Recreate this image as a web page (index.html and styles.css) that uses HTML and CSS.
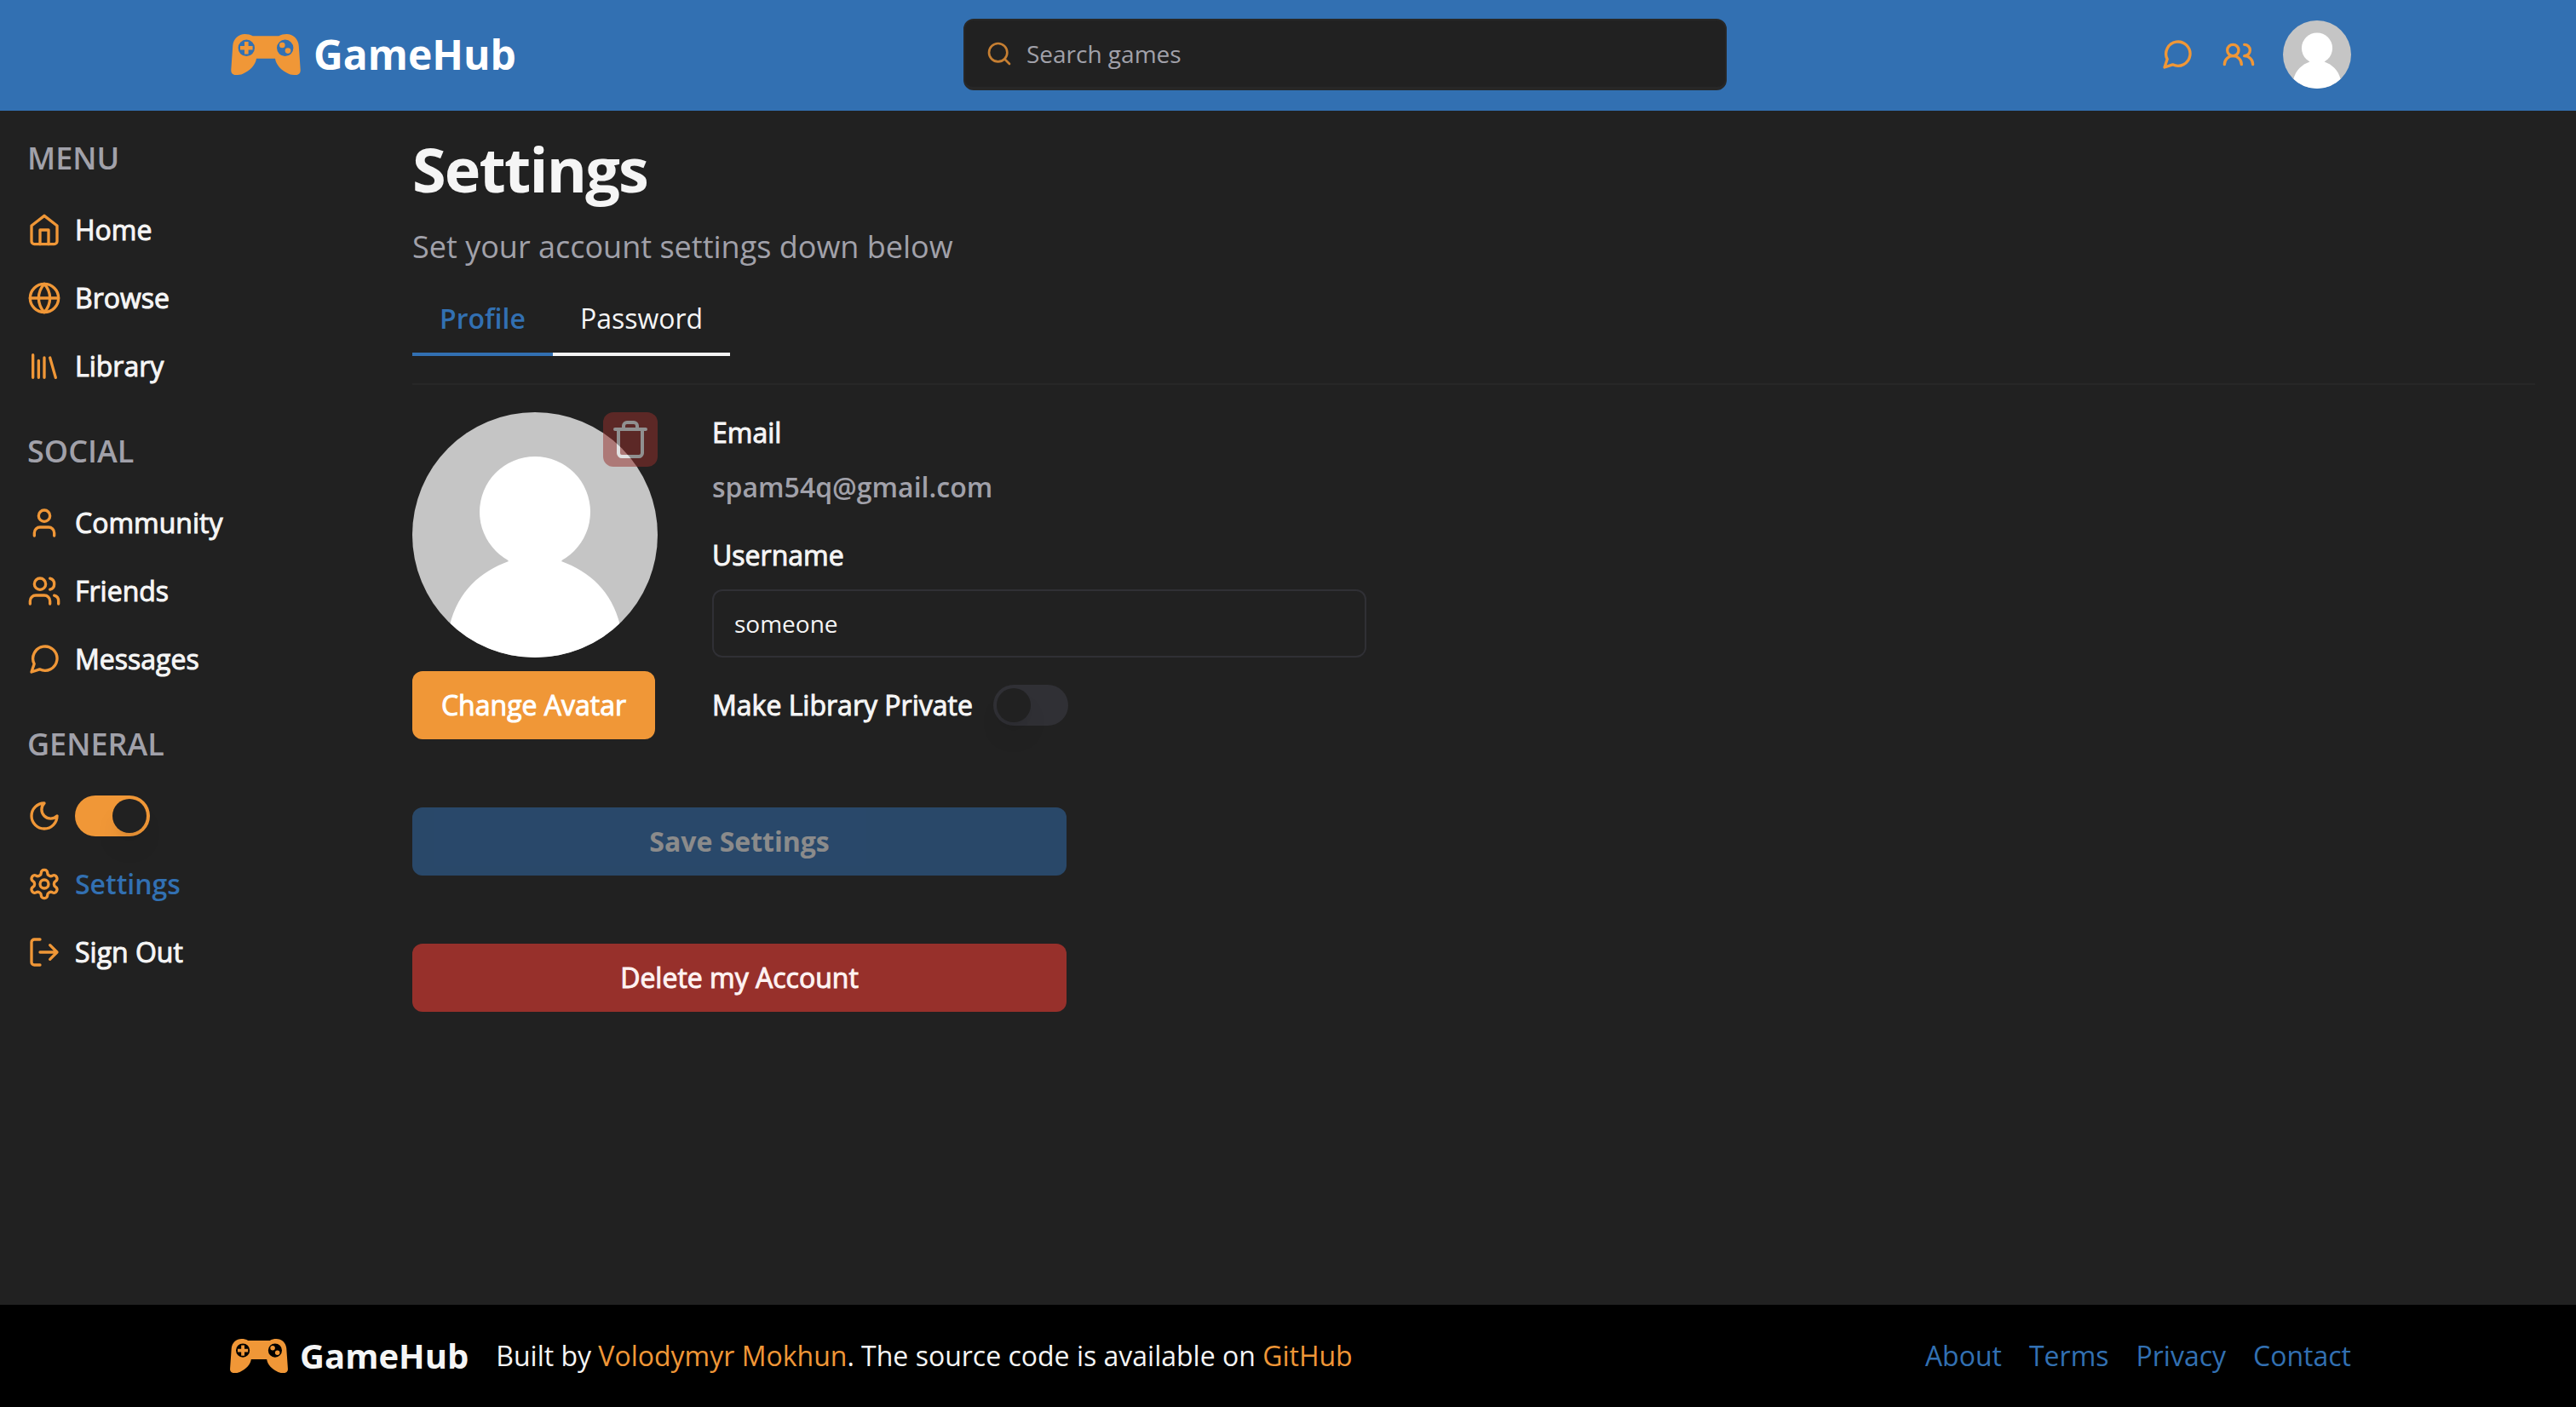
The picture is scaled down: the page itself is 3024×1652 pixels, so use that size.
FILE: index.html
```html
<!DOCTYPE html>
<html lang="en">
<head>
<meta charset="utf-8">
<meta name="viewport" content="width=device-width, initial-scale=1">
<title>Settings | GameHub</title>
<link rel="stylesheet" href="styles.css">
</head>
<body>
<svg class="sprite" aria-hidden="true">
  <symbol id="gamepad" viewBox="0 0 96 96">
    <path fill="currentColor" fill-rule="evenodd" d="M23.500 24C27 24 30 24.800 32.700 26.300H63.300C66 24.800 69 24 72.500 24C80 24 86 29.500 86.700 37.300L88.700 65.700C89 69.500 87 72 83.300 72C80 72 77.500 71.800 75 70.700C66 66.500 60 60 59 52.700H37C36 60 30 66.500 21 70.700C18.500 71.800 16 72 12.700 72C9 72 7 69.500 7.300 65.700L9.300 37.300C10 29.500 16 24 23.500 24ZM25.300 30.600a9.700 9.700 0 1 0 0 19.400a9.700 9.700 0 1 0 0-19.400ZM70.700 30.600a9.700 9.700 0 1 0 0 19.400a9.700 9.700 0 1 0 0-19.400Z"/>
    <path fill="currentColor" d="M23 33h4.600v5h5v4.600h-5v5H23v-5h-5V38h5z"/>
    <circle cx="67.300" cy="37" r="3.300" fill="currentColor"/>
    <circle cx="74" cy="43.600" r="3.300" fill="currentColor"/>
  </symbol>
  <symbol id="person" viewBox="0 0 288 288">
    <rect width="288" height="288" fill="#c5c5c5"/>
    <circle cx="144" cy="117" r="65" fill="#fff"/>
    <path fill="#fff" d="M108 168L113 175C80 187 54 210 44 250V288H244V250C234 210 208 187 175 175L180 168Z"/>
  </symbol>
  <symbol id="message" viewBox="0 0 24 24"><path d="m3 21 1.900-5.700a8.500 8.500 0 1 1 3.800 3.800z"/></symbol>
</svg>

<header class="topbar">
  <div class="container topbar-row">
    <a class="brand" href="#"><svg class="brand-icon"><use href="#gamepad"/></svg><span>GameHub</span></a>
    <div class="search">
      <svg class="icon search-icon" viewBox="0 0 24 24"><circle cx="11" cy="11" r="8"/><path d="m21 21-4.300-4.300"/></svg>
      <input class="search-input" type="text" placeholder="Search games" aria-label="Search games">
    </div>
    <nav class="actions" aria-label="Account">
      <a class="action" href="#" aria-label="Messages"><svg class="icon"><use href="#message"/></svg></a>
      <a class="action" href="#" aria-label="Friends"><svg class="icon" viewBox="0 0 24 24"><path d="M14 19a6 6 0 0 0-12 0"/><circle cx="8" cy="9" r="4"/><path d="M22 19a6 6 0 0 0-6-6 4 4 0 1 0 0-8"/></svg></a>
      <button class="account" type="button" aria-label="Account menu"><svg class="account-image"><use href="#person"/></svg></button>
    </nav>
  </div>
</header>

<div class="layout">
  <aside class="sidebar">
    <section class="group">
      <h2 class="group-title">MENU</h2>
      <a class="item" href="#"><svg class="icon" viewBox="0 0 24 24"><path d="m3 9 9-7 9 7v11a2 2 0 0 1-2 2H5a2 2 0 0 1-2-2z"/><path d="M9 22V12h6v10"/></svg><span>Home</span></a>
      <a class="item" href="#"><svg class="icon" viewBox="0 0 24 24"><circle cx="12" cy="12" r="10"/><path d="M2 12h20M12 2a15.300 15.300 0 0 1 4 10 15.300 15.300 0 0 1-4 10 15.300 15.300 0 0 1-4-10 15.300 15.300 0 0 1 4-10z"/></svg><span>Browse</span></a>
      <a class="item" href="#"><svg class="icon" viewBox="0 0 24 24"><path d="m16 6 4 14M12 6v14M8 8v12M4 4v16"/></svg><span>Library</span></a>
    </section>
    <section class="group">
      <h2 class="group-title">SOCIAL</h2>
      <a class="item" href="#"><svg class="icon" viewBox="0 0 24 24"><path d="M19 21v-2a4 4 0 0 0-4-4H9a4 4 0 0 0-4 4v2"/><circle cx="12" cy="7" r="4"/></svg><span>Community</span></a>
      <a class="item" href="#"><svg class="icon" viewBox="0 0 24 24"><path d="M16 21v-2a4 4 0 0 0-4-4H6a4 4 0 0 0-4 4v2"/><circle cx="9" cy="7" r="4"/><path d="M22 21v-2a4 4 0 0 0-3-3.870M16 3.130a4 4 0 0 1 0 7.750"/></svg><span>Friends</span></a>
      <a class="item" href="#"><svg class="icon"><use href="#message"/></svg><span>Messages</span></a>
    </section>
    <section class="group">
      <h2 class="group-title">GENERAL</h2>
      <div class="item"><svg class="icon" viewBox="0 0 24 24"><path d="M12 3a6 6 0 0 0 9 9 9 9 0 1 1-9-9Z"/></svg><input class="switch" type="checkbox" role="switch" aria-label="Dark mode" checked></div>
      <a class="item item-active" href="#" aria-current="page"><svg class="icon" viewBox="0 0 24 24"><path d="M12.220 2h-.440a2 2 0 0 0-2 2v.180a2 2 0 0 1-1 1.730l-.430.250a2 2 0 0 1-2 0l-.150-.080a2 2 0 0 0-2.730.730l-.220.380a2 2 0 0 0 .730 2.730l.150.100a2 2 0 0 1 1 1.720v.510a2 2 0 0 1-1 1.740l-.150.090a2 2 0 0 0-.730 2.730l.220.380a2 2 0 0 0 2.730.730l.150-.080a2 2 0 0 1 2 0l.430.250a2 2 0 0 1 1 1.730V20a2 2 0 0 0 2 2h.440a2 2 0 0 0 2-2v-.180a2 2 0 0 1 1-1.730l.430-.250a2 2 0 0 1 2 0l.150.080a2 2 0 0 0 2.730-.730l.220-.390a2 2 0 0 0-.730-2.730l-.150-.080a2 2 0 0 1-1-1.740v-.500a2 2 0 0 1 1-1.740l.150-.090a2 2 0 0 0 .730-2.730l-.220-.380a2 2 0 0 0-2.730-.730l-.150.080a2 2 0 0 1-2 0l-.430-.250a2 2 0 0 1-1-1.730V4a2 2 0 0 0-2-2z"/><circle cx="12" cy="12" r="3"/></svg><span>Settings</span></a>
      <button class="item" type="button"><svg class="icon" viewBox="0 0 24 24"><path d="M9 21H5a2 2 0 0 1-2-2V5a2 2 0 0 1 2-2h4M16 17l5-5-5-5M21 12H9"/></svg><span>Sign Out</span></button>
    </section>
  </aside>

  <main class="content">
    <h1 class="title">Settings</h1>
    <p class="subtitle">Set your account settings down below</p>
    <nav class="tabs" aria-label="Settings sections">
      <a class="tab tab-active" href="#" aria-current="page">Profile</a>
      <a class="tab" href="#">Password</a>
    </nav>
    <form class="form">
      <div class="profile">
        <div class="avatar-column">
          <div class="avatar">
            <svg class="avatar-image" role="img" aria-label="Your avatar"><use href="#person"/></svg>
            <button class="avatar-remove" type="button" aria-label="Remove avatar" disabled><svg class="icon" viewBox="0 0 24 24"><path d="M3 6h18M19 6v14c0 1-1 2-2 2H7c-1 0-2-1-2-2V6M8 6V4c0-1 1-2 2-2h4c1 0 2 1 2 2v2"/></svg></button>
          </div>
          <button class="button button-accent" type="button">Change Avatar</button>
        </div>
        <div class="fields">
          <div class="field">
            <span class="label">Email</span>
            <span class="email">spam54q@gmail.com</span>
          </div>
          <div class="field">
            <label class="label" for="username">Username</label>
            <input class="text-input" id="username" type="text" value="someone">
          </div>
          <div class="switch-row">
            <label class="label" for="private">Make Library Private</label>
            <input class="switch" id="private" type="checkbox" role="switch">
          </div>
        </div>
      </div>
      <button class="button button-primary" type="submit" disabled>Save Settings</button>
      <button class="button button-danger" type="button">Delete my Account</button>
    </form>
  </main>
</div>

<footer class="footer">
  <div class="container footer-row">
    <a class="brand brand-small" href="#"><svg class="brand-icon"><use href="#gamepad"/></svg><span>GameHub</span></a>
    <p class="credit">Built by <a class="credit-link" href="#">Volodymyr Mokhun</a>. The source code is available on <a class="credit-link" href="#">GitHub</a></p>
    <nav class="footer-nav" aria-label="Footer">
      <a class="footer-link" href="#">About</a>
      <a class="footer-link" href="#">Terms</a>
      <a class="footer-link" href="#">Privacy</a>
      <a class="footer-link" href="#">Contact</a>
    </nav>
  </div>
</footer>
</body>
</html>
```

FILE: styles.css
```css
:root {
  --background: #212121;
  --foreground: #f5f5f5;
  --muted: #a1a1aa;
  --primary: #3270b2;
  --accent: #f09737;
  --danger: #97302b;
  --line: #272727;
  --input: #303035;
  --radius: 12px;
}

* { box-sizing: border-box; }

body {
  margin: 0;
  min-height: 100vh;
  display: flex;
  flex-direction: column;
  background: var(--background);
  color: var(--foreground);
  font: 400 32px/48px "Open Sans", "Noto Sans", sans-serif;
}

h1, h2, p { margin: 0; }
a { color: inherit; text-decoration: none; }
button, input { font: inherit; color: inherit; margin: 0; }
button { border: 0; padding: 0; background: none; cursor: pointer; }

.sprite { position: absolute; width: 0; height: 0; }

.icon {
  flex: none;
  width: 40px;
  height: 40px;
  fill: none;
  stroke: var(--accent);
  stroke-width: 2;
  stroke-linecap: round;
  stroke-linejoin: round;
}

.container {
  width: 100%;
  max-width: 2560px;
  margin: 0 auto;
  padding: 0 32px;
  display: flex;
  align-items: center;
}

.item, .label, .button-accent, .button-danger {
  font-weight: 500;
  -webkit-text-stroke: 1px currentColor;
}

/* Top bar */
.topbar { background: var(--primary); border-bottom: 2px solid var(--primary); }
.topbar-row { justify-content: space-between; height: 128px; }

.brand {
  display: flex;
  align-items: center;
  gap: 8px;
  padding-right: 16px;
  color: #fff;
  font-size: 48px;
  line-height: 64px;
  font-weight: 700;
}
.brand-icon { flex: none; width: 96px; height: 96px; color: var(--accent); }

.search {
  display: flex;
  align-items: center;
  gap: 16px;
  width: 896px;
  height: 84px;
  padding: 0 24px;
  background: var(--background);
  border: 2px solid var(--line);
  border-bottom-width: 4px;
  border-radius: var(--radius);
}
.search-icon { width: 32px; height: 32px; opacity: 0.8; }
.search-input {
  flex: 1;
  min-width: 0;
  padding: 0;
  border: 0;
  outline: 0;
  background: none;
  font-size: 28px;
  line-height: 40px;
}
.search-input::placeholder { color: var(--muted); opacity: 1; }

.actions { display: flex; align-items: center; gap: 32px; }
.action { display: flex; }
.account { display: flex; border-radius: 50%; overflow: hidden; }
.account-image { width: 80px; height: 80px; }

/* Page body */
.layout { flex: 1; display: flex; }

.sidebar {
  flex: none;
  width: 436px;
  padding: 28px 32px;
  display: flex;
  flex-direction: column;
  gap: 32px;
}
.group { display: flex; flex-direction: column; }
.group-title {
  margin-bottom: 16px;
  color: var(--muted);
  font-size: 36px;
  line-height: 56px;
  font-weight: 600;
}
.item {
  display: flex;
  align-items: center;
  gap: 16px;
  height: 80px;
}
.item-active { color: var(--primary); font-weight: 600; -webkit-text-stroke: 0; }

.switch {
  appearance: none;
  flex: none;
  width: 88px;
  height: 48px;
  padding: 4px;
  display: flex;
  background: var(--input);
  border-radius: 24px;
  cursor: pointer;
}
.switch::before {
  content: "";
  width: 40px;
  height: 40px;
  border-radius: 50%;
  background: var(--background);
  box-shadow: 0 20px 30px -6px rgb(0 0 0 / 0.1), 0 8px 12px -8px rgb(0 0 0 / 0.1);
}
.switch:checked { background: var(--accent); justify-content: flex-end; }

.content { flex: 1; min-width: 0; padding: 28px 48px 80px; }
.title { font-size: 72px; line-height: 80px; font-weight: 700; letter-spacing: -0.025em; }
.subtitle { margin-top: 24px; color: var(--muted); font-size: 36px; line-height: 56px; }

.tabs { display: flex; margin-top: 16px; padding-bottom: 32px; border-bottom: 2px solid var(--line); }
.tab { padding: 16px 32px; border-bottom: 4px solid var(--foreground); }
.tab-active { color: var(--primary); border-color: var(--primary); font-weight: 600; }

/* Profile form */
.form { display: flex; flex-direction: column; align-items: flex-start; gap: 80px; padding-top: 32px; }
.profile { display: flex; gap: 64px; }
.avatar-column { display: flex; flex-direction: column; align-items: flex-start; gap: 16px; }
.avatar { position: relative; display: flex; }
.avatar-image { width: 288px; height: 288px; border-radius: 50%; }
.avatar-remove {
  position: absolute;
  top: 0;
  right: 0;
  display: flex;
  padding: 8px;
  border-radius: var(--radius);
  background: var(--danger);
  opacity: 0.5;
}
.avatar-remove .icon { width: 48px; height: 48px; stroke: #fff; }

.fields { display: flex; flex-direction: column; gap: 32px; }
.field { display: flex; flex-direction: column; gap: 16px; }
.email { color: var(--muted); font-weight: 600; }
.text-input {
  width: 768px;
  height: 80px;
  padding: 0 24px;
  background: none;
  border: 2px solid var(--input);
  border-radius: var(--radius);
  font-size: 28px;
  line-height: 40px;
}
.switch-row { display: flex; align-items: center; gap: 24px; }

.button {
  height: 80px;
  padding: 0 32px;
  border-radius: var(--radius);
}
.button-accent { min-width: 285px; background: var(--accent); color: #fff; }
.button-primary, .button-danger { width: 768px; }
.button-primary { background: var(--primary); font-weight: 700; }
.button-danger { background: var(--danger); color: #fef2f2; }
.button:disabled { opacity: 0.5; }

/* Footer */
.footer { background: #000; }
.footer-row { height: 120px; gap: 16px; }
.brand-small { color: var(--foreground); font-size: 40px; line-height: 56px; }
.brand-small .brand-icon { width: 80px; height: 80px; }
.credit-link { color: var(--accent); }
.footer-nav { display: flex; gap: 32px; margin-left: auto; color: var(--primary); }
```
